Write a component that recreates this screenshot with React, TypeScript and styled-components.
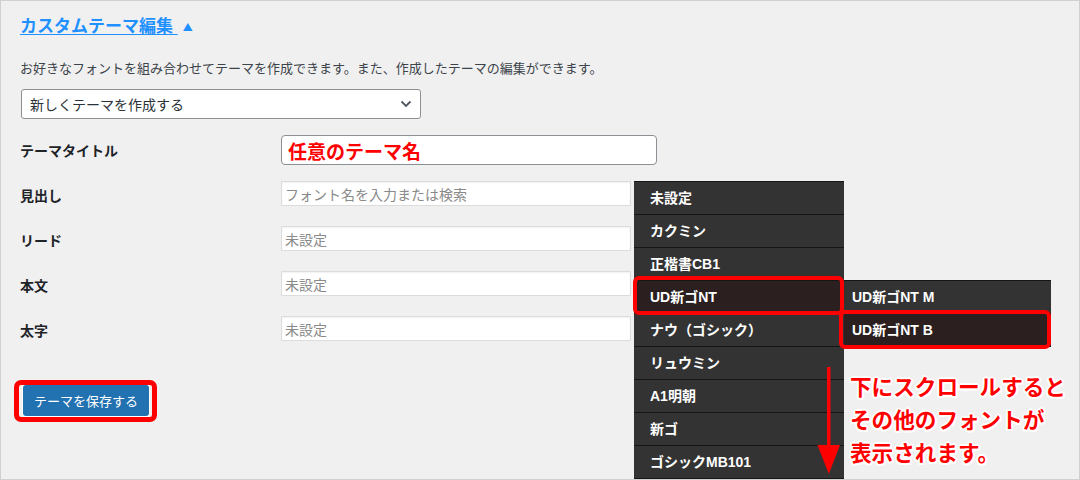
import React from "react";
import styled, { createGlobalStyle } from "styled-components";

const Global = createGlobalStyle`
  html, body { margin: 0; padding: 0; background: #f0f0f0; }
  body { font-family: "Liberation Sans", "Noto Sans CJK JP", sans-serif; }
  * { box-sizing: border-box; }
`;

const Frame = styled.div`
  position: relative;
  width: 1080px;
  height: 480px;
  border: 1px solid #d0d0d0;
  background: #f0f0f0;
  overflow: hidden;
  padding: 14px 0 0 19px;
  display: flex;
  flex-direction: column;
  align-items: flex-start;
`;

const Heading = styled.h2`
  margin: 0;
  font-size: 17px;
  line-height: 24px;
  font-weight: 700;
  color: #1e90ff;
  display: flex;
  align-items: center;
  gap: 5px;
`;

const HeadingLink = styled.a`
  color: inherit;
  text-decoration: underline;
  text-decoration-thickness: 1px;
  text-underline-offset: 2px;
  white-space: pre;
`;

const Caret = styled.span`
  font-family: "Noto Sans CJK JP", sans-serif;
  font-size: 10px;
  line-height: 1;
`;

const Lead = styled.p`
  margin: 19px 0 0;
  font-size: 13px;
  line-height: 21px;
  color: #3c434a;
`;

const SelectBox = styled.div`
  margin: 10px 0 0 1px;
  width: 400px;
  height: 30px;
  border: 1px solid #8c8f94;
  border-radius: 3px;
  background: #fff;
  display: flex;
  align-items: center;
  justify-content: space-between;
  padding: 0 8px 0 8px;
  font-size: 14px;
  color: #2c3338;
`;

const Form = styled.div`
  margin-top: 16px;
  display: flex;
  flex-direction: column;
  gap: 20px;
`;

const FieldRow = styled.div<{ $h: number; $tight?: boolean }>`
  display: grid;
  grid-template-columns: 261px auto;
  align-items: center;
  height: ${(p) => p.$h}px;
  margin-bottom: ${(p) => (p.$tight ? -4 : 0)}px;
`;

const Label = styled.div<{ $shift?: number }>`
  font-size: 14px;
  font-weight: 700;
  color: #1d2327;
  padding-top: ${(p) => p.$shift ?? 0}px;
`;

const TitleField = styled.div`
  width: 376px;
  height: 30px;
  border: 1px solid #8c8f94;
  border-radius: 4px;
  background: #fff;
  padding-left: 6px;
  display: flex;
  align-items: center;
  font-family: "Noto Sans CJK JP", sans-serif;
  font-size: 19px;
  font-weight: 700;
  color: #ff0000;
`;

const FontField = styled.div`
  width: 350px;
  height: 25px;
  border: 1px solid #dcdcdc;
  background: #fff;
  box-shadow: inset 0 1px 2px rgba(0, 0, 0, 0.06);
  padding-left: 3px;
  display: flex;
  align-items: center;
  font-size: 14px;
  color: #8a8a8a;
`;

const SaveButton = styled.div`
  position: relative;
  margin: 44px 0 0 3px;
  width: 126px;
  height: 31px;
  border-radius: 3px;
  background: #2271b1;
  color: #fff;
  font-size: 13px;
  display: flex;
  align-items: center;
  justify-content: center;
  box-shadow: 0 0 0 1px #fff;
  &::after {
    content: "";
    position: absolute;
    left: -9px;
    right: -8px;
    top: -5px;
    bottom: -6px;
    border: 5px solid #ff0000;
    border-radius: 7px;
  }
`;

const Menu = styled.ul<{ $left: number; $top: number; $w: number }>`
  position: absolute;
  left: ${(p) => p.$left}px;
  top: ${(p) => p.$top}px;
  width: ${(p) => p.$w}px;
  margin: 0;
  padding: 0;
  list-style: none;
  background: #333333;
  border-top: 1px solid #161616;
`;

const MenuItem = styled.li<{ $pad: number; $marked?: boolean; $box?: [number, number, number, number] }>`
  position: relative;
  height: 33px;
  border-bottom: 1px solid #161616;
  padding-left: ${(p) => p.$pad}px;
  background: ${(p) => (p.$marked ? "#2b1f1f" : "transparent")};
  color: #fff;
  font-size: 14px;
  font-weight: 700;
  line-height: 32px;
  white-space: nowrap;
  ${(p) =>
    p.$box
      ? `&::after {
    content: "";
    position: absolute;
    top: ${p.$box[0]}px;
    right: ${p.$box[1]}px;
    bottom: ${p.$box[2]}px;
    left: ${p.$box[3]}px;
    border: 4px solid #ff0000;
    border-radius: 6px;
  }`
      : ""}
`;

const Arrow = styled.svg`
  position: absolute;
  left: 816px;
  top: 365px;
`;

const Note = styled.div`
  position: absolute;
  left: 849px;
  top: 368px;
  font-family: "Noto Sans CJK JP", sans-serif;
  font-size: 21.6px;
  font-weight: 700;
  line-height: 33px;
  color: #ff0000;
  white-space: nowrap;
  text-shadow: 2px 0 #fff, -2px 0 #fff, 0 2px #fff, 0 -2px #fff,
    1.5px 1.5px #fff, -1.5px 1.5px #fff, 1.5px -1.5px #fff, -1.5px -1.5px #fff;
`;

const fonts = [
  "未設定",
  "カクミン",
  "正楷書CB1",
  "UD新ゴNT",
  "ナウ（ゴシック）",
  "リュウミン",
  "A1明朝",
  "新ゴ",
  "ゴシックMB101",
];

export default function App() {
  return (
    <>
      <Global />
      <Frame>
        <Heading>
          <HeadingLink>{"カスタムテーマ編集 "}</HeadingLink>
          <Caret>▲</Caret>
        </Heading>
        <Lead>
          お好きなフォントを組み合わせてテーマを作成できます。また、作成したテーマの編集ができます。
        </Lead>
        <SelectBox>
          <span>新しくテーマを作成する</span>
          <svg width="12" height="8" viewBox="0 0 12 8">
            <polyline points="1.5,1.5 6,6 10.5,1.5" fill="none" stroke="#50575e" strokeWidth="1.8" />
          </svg>
        </SelectBox>
        <Form>
          <FieldRow $h={30} $tight>
            <Label>テーマタイトル</Label>
            <TitleField>任意のテーマ名</TitleField>
          </FieldRow>
          <FieldRow $h={25}>
            <Label $shift={3}>見出し</Label>
            <FontField>フォント名を入力または検索</FontField>
          </FieldRow>
          <FieldRow $h={25}>
            <Label $shift={3}>リード</Label>
            <FontField>未設定</FontField>
          </FieldRow>
          <FieldRow $h={25}>
            <Label $shift={3}>本文</Label>
            <FontField>未設定</FontField>
          </FieldRow>
          <FieldRow $h={25}>
            <Label $shift={3}>太字</Label>
            <FontField>未設定</FontField>
          </FieldRow>
        </Form>
        <SaveButton>テーマを保存する</SaveButton>

        <Menu $left={633} $top={180} $w={210}>
          {fonts.map((f) => (
            <MenuItem
              key={f}
              $pad={16}
              $marked={f === "UD新ゴNT"}
              $box={f === "UD新ゴNT" ? [-5, 0, -2, -1] : undefined}
            >
              {f}
            </MenuItem>
          ))}
        </Menu>
        <Menu $left={843} $top={279} $w={207}>
          <MenuItem $pad={8}>UD新ゴNT M</MenuItem>
          <MenuItem $pad={8} $marked $box={[-4, 0, -3, -5]}>
            UD新ゴNT B
          </MenuItem>
        </Menu>

        <Arrow width="24" height="110" viewBox="0 0 24 110">
          <rect x="10" y="1" width="3.5" height="82" fill="#ff0000" />
          <polygon points="0.5,79 23,79 11.8,108" fill="#ff0000" />
        </Arrow>
        <Note>
          下にスクロールすると
          <br />
          その他のフォントが
          <br />
          表示されます。
        </Note>
      </Frame>
    </>
  );
}
